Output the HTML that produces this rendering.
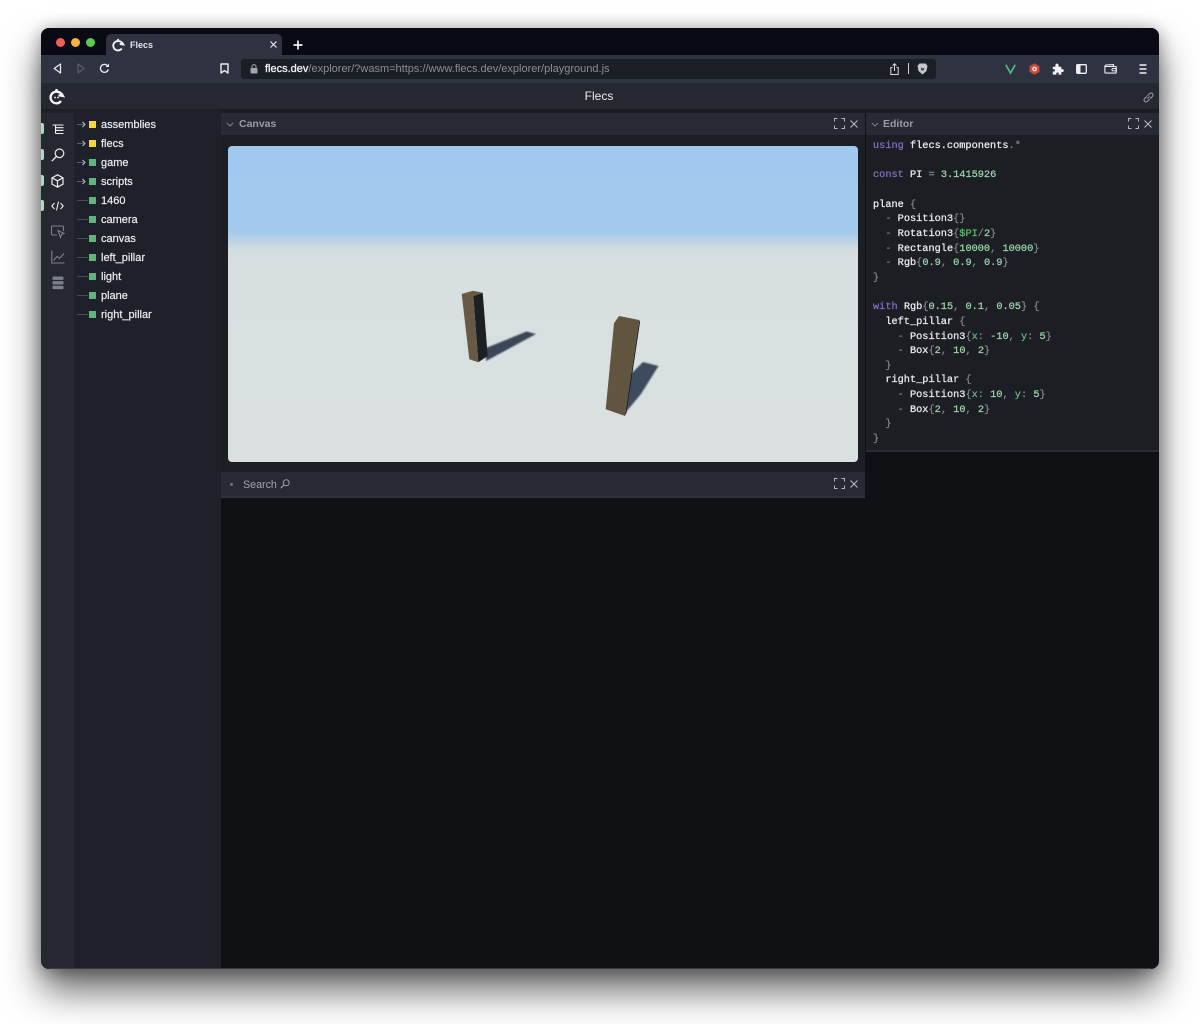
<!DOCTYPE html>
<html><head><meta charset="utf-8"><title>Flecs</title>
<style>
html,body{margin:0;padding:0;background:#fff;width:1200px;height:1024px;overflow:hidden}
*{box-sizing:border-box}
body{font-family:"Liberation Sans",sans-serif;position:relative}
#root{position:absolute;left:0;top:0;width:1200px;height:1024px;filter:blur(.3px)}
.a{position:absolute}
#win{left:41px;top:28px;width:1118px;height:941px;border-radius:8px;background:#101114;box-shadow:0 22px 38px rgba(0,0,0,.58),0 2px 18px rgba(0,0,0,.36)}
.t{position:absolute;white-space:pre;line-height:14px}
.row{position:absolute;left:101px;font-size:11px;color:#eceDF0;line-height:14px;white-space:pre;-webkit-text-stroke:.2px #eceDF0}
.sq{position:absolute;left:89px;width:7px;height:7px}
.dash{position:absolute;left:77px;width:11px;height:1px;background:#4a4d55}
.pill{position:absolute;left:41px;width:3px;height:11px;background:#a9dcb8;border-radius:0 2px 2px 0}
.code{position:absolute;left:873px;font-family:"Liberation Mono",monospace;font-size:10.28px;line-height:14px;white-space:pre;color:#eceDF0;-webkit-text-stroke:.25px currentColor}
.code i{font-style:normal}
.k{color:#7f6fc0}.n{color:#9ad6aa}.p{color:#80838c}.g{color:#5db87c}
svg{position:absolute;overflow:visible}
</style></head><body><div id="root">
<div id="win" class="a"></div>

<!-- tab strip -->
<div class="a" style="left:41px;top:28px;width:1118px;height:27px;background:#0a0a15;border-radius:8px 8px 0 0"></div>
<div class="a" style="left:56px;top:38px;width:9px;height:9px;border-radius:50%;background:#ee5f57"></div>
<div class="a" style="left:71px;top:38px;width:9px;height:9px;border-radius:50%;background:#f5b13d"></div>
<div class="a" style="left:86px;top:38px;width:9px;height:9px;border-radius:50%;background:#5fc94e"></div>
<div class="a" style="left:106px;top:34px;width:176px;height:21px;background:#2f3241;border-radius:5px 5px 0 0"></div>
<svg style="left:112px;top:37px" width="13" height="15" viewBox="0 0 16 18"><path d="M12 14A5.800 5.800 0 1 1 7.500 4.700C10 4.700 12.500 6 14 9L9.500 8.300" fill="none" stroke="#f2f2f4" stroke-width="2.300"/><circle cx="7.500" cy="3.200" r="1.300" fill="#f2f2f4"/></svg>
<div class="t" style="left:130px;top:38px;font-size:9px;font-weight:700;color:#e4e5ea">Flecs</div>
<svg style="left:270px;top:41px" width="7" height="7" viewBox="0 0 7 7"><path d="M.5.500l6 6M6.500.5l-6 6" stroke="#eceef2" stroke-width="1.100"/></svg>
<svg style="left:293px;top:40px" width="10" height="10" viewBox="0 0 10 10"><path d="M5 .5v9M.5 5h9" stroke="#f4f4f6" stroke-width="1.700"/></svg>

<!-- toolbar -->
<div class="a" style="left:41px;top:55px;width:1118px;height:28px;background:#2f3241"></div>
<svg style="left:53px;top:63px" width="9" height="11" viewBox="0 0 9 11"><path d="M7.500 1L1.200 5.500 7.500 10z" fill="none" stroke="#e8e9ec" stroke-width="1.300" stroke-linejoin="round"/></svg>
<svg style="left:77px;top:63px" width="8" height="11" viewBox="0 0 8 11"><path d="M1 1l6 4.500L1 10z" fill="none" stroke="#5a5d6a" stroke-width="1.200" stroke-linejoin="round"/></svg>
<svg style="left:99px;top:63px" width="11" height="11" viewBox="0 0 11 11"><path d="M9.300 6.500A4 4 0 1 1 8.200 2.400L9.500 3.500" fill="none" stroke="#eceef0" stroke-width="1.300"/><path d="M10 .6v3.400H6.600z" fill="#eceef0"/></svg>
<svg style="left:220px;top:63px" width="9" height="11" viewBox="0 0 9 11"><path d="M1 1h7v9L4.500 7.600 1 10z" fill="none" stroke="#eceef0" stroke-width="1.400" stroke-linejoin="round"/></svg>
<div class="a" style="left:241px;top:59px;width:695px;height:20px;background:#1c1e26;border-radius:3px"></div>
<svg style="left:250px;top:64px" width="8" height="10" viewBox="0 0 8 10"><rect x=".5" y="4" width="7" height="5.500" rx="1" fill="#a4a6ae"/><path d="M2 4V2.600a2 2 0 0 1 4 0V4" fill="none" stroke="#a4a6ae" stroke-width="1"/></svg>
<div class="t" style="left:265px;top:62px;font-size:11px;color:#8b8e97"><span style="color:#f4f5f7;-webkit-text-stroke:.3px #f4f5f7">flecs.dev</span>/explorer/?wasm=https://www.flecs.dev/explorer/playground.js</div>
<svg style="left:890px;top:63px" width="9" height="12" viewBox="0 0 9 12"><path d="M2.500 4.500H.8v7h7.400v-7H6.500M4.500 8V1M2.600 2.600L4.500.7l1.900 1.900" fill="none" stroke="#d8d9de" stroke-width="1"/></svg>
<div class="a" style="left:908px;top:63px;width:1px;height:11px;background:#d0d1d6"></div>
<svg style="left:917px;top:63px" width="11" height="12" viewBox="0 0 11 12"><path d="M2.500.5h6l2 2.300-1 5.200-4 3.500-4-3.500-1-5.200z" fill="#c4c6cd"/><path d="M3.500 4.500l2 1 2-1-1 3h-2z" fill="#3a3c48"/></svg>
<svg style="left:1005px;top:64px" width="11" height="10" viewBox="0 0 11 10"><path d="M.8.800L5.500 9 10.200.8" fill="none" stroke="#4cb985" stroke-width="1.700"/></svg>
<svg style="left:1029px;top:63px" width="11" height="12" viewBox="0 0 11 12"><path d="M5.500.3l5 2.800v5.800l-5 2.800-5-2.800V3.100z" fill="#cd4a3e"/><circle cx="5.500" cy="6" r="2.400" fill="#f2e4e0"/><circle cx="5.500" cy="6" r="1" fill="#cd4a3e"/></svg>
<svg style="left:1052px;top:63px" width="12" height="12" viewBox="0 0 12 12"><path d="M.8 3.800h2.700C3 1.500 4 .6 5 .6s2 .9 1.500 3.200h2.900v2.500c2-.5 2.400.6 2.400 1.300s-.4 1.800-2.400 1.300v2.700H6.600c.4-1.600-.3-2.100-1.100-2.100s-1.500.5-1.100 2.100H.8V8.500c1.600.4 2.100-.3 2.100-1.100S2.400 5.900.8 6.300z" fill="#f0f1f3"/></svg>
<svg style="left:1076px;top:64px" width="11" height="10" viewBox="0 0 11 10"><rect x=".7" y=".7" width="9.600" height="8.600" rx="1" fill="none" stroke="#f0f1f3" stroke-width="1.300"/><rect x="1" y="1" width="3.500" height="8" fill="#f0f1f3"/></svg>
<svg style="left:1104px;top:64px" width="13" height="10" viewBox="0 0 13 10"><path d="M1 2.500h10.500a.8.8 0 0 1 .8.8v5a.8.8 0 0 1-.8.8H1.700a.8.8 0 0 1-.8-.8V2.200C.9 1.500 1.400 1.200 2 1L9.500.6v1.900" fill="none" stroke="#eceef0" stroke-width="1.100"/><rect x="8" y="4.500" width="4.300" height="2.400" rx="1" fill="none" stroke="#eceef0" stroke-width="1"/></svg>
<svg style="left:1139px;top:64px" width="8" height="10" viewBox="0 0 8 10"><path d="M.5 1h7M.5 5h7M.5 9h7" stroke="#f0f1f3" stroke-width="1.400"/></svg>

<!-- app header -->
<div class="a" style="left:41px;top:83px;width:1118px;height:27px;background:#252831;border-bottom:1px solid #1a1c22"></div>
<svg style="left:49px;top:87px" width="16" height="18" viewBox="0 0 16 18"><path d="M12 14A5.800 5.800 0 1 1 7.500 4.700C10 4.700 12.500 6 14 9L9.500 8.300" fill="none" stroke="#f4f5f7" stroke-width="2.300"/><circle cx="7.500" cy="3.200" r="1.300" fill="#f4f5f7"/><circle cx="6" cy="10.500" r=".9" fill="#f4f5f7"/><circle cx="9" cy="10.500" r=".9" fill="#f4f5f7"/></svg>
<div class="t" style="left:0;top:89px;width:1198px;text-align:center;font-size:12px;color:#eceef0">Flecs</div>
<svg style="left:1143px;top:92px" width="11" height="11" viewBox="0 0 11 11"><path d="M4.500 6.500l2-2M3.800 4.400L1.600 6.600a1.900 1.900 0 0 0 2.800 2.800l2.200-2.200M7.200 6.600l2.200-2.200a1.900 1.900 0 0 0-2.800-2.800L4.400 3.800" fill="none" stroke="#a2a4ac" stroke-width="1"/></svg>

<!-- left rail -->
<div class="a" style="left:41px;top:110px;width:33px;height:859px;background:#252831;border-radius:0 0 0 8px"></div>
<div class="a" style="left:74px;top:110px;width:147px;height:859px;background:#1e2129"></div>
<div class="a" style="left:41px;top:110px;width:180px;height:3px;background:#1f2128"></div>
<div class="pill" style="top:123px"></div>
<div class="pill" style="top:149px"></div>
<div class="pill" style="top:175px"></div>
<div class="pill" style="top:200px"></div>
<svg style="left:52px;top:124px" width="12" height="11" viewBox="0 0 12 11"><path d="M.5 1h11M3.500 3.700h8M3.500 6.400h8M3.500 9.500h8M3.500 1v8.500" fill="none" stroke="#eceef0" stroke-width="1.100"/></svg>
<svg style="left:51px;top:148px" width="14" height="14" viewBox="0 0 14 14"><circle cx="8.500" cy="5.300" r="4.300" fill="none" stroke="#eceef0" stroke-width="1.200"/><path d="M5.400 8.500L.8 13.200" stroke="#eceef0" stroke-width="1.300"/></svg>
<svg style="left:51px;top:174px" width="13" height="14" viewBox="0 0 13 14"><path d="M6.500.8l5.500 3v6.400l-5.500 3-5.500-3V3.800zM1 3.800l5.500 3 5.500-3M6.500 6.800v6.400" fill="none" stroke="#eceef0" stroke-width="1.200"/></svg>
<svg style="left:51px;top:201px" width="13" height="10" viewBox="0 0 13 10"><path d="M3.500 2L.8 5l2.700 3M9.500 2l2.700 3-2.700 3M7.500.6L5.500 9.400" fill="none" stroke="#eceef0" stroke-width="1.100"/></svg>
<svg style="left:51px;top:225px" width="14" height="14" viewBox="0 0 14 14"><path d="M6 10H1.500a1 1 0 0 1-1-1V2a1 1 0 0 1 1-1h10a1 1 0 0 1 1 1v4" fill="none" stroke="#7e818a" stroke-width="1.100"/><path d="M7 5.500l6 3-2.500 1-1 3z" fill="none" stroke="#7e818a" stroke-width="1.100"/></svg>
<svg style="left:51px;top:250px" width="14" height="14" viewBox="0 0 14 14"><path d="M.8.500v12.500h12.700M2.500 10.500l3.500-4 2.500 2 4.500-5" fill="none" stroke="#7e818a" stroke-width="1.100"/></svg>
<svg style="left:52px;top:276px" width="12" height="14" viewBox="0 0 12 14"><rect x=".5" y=".5" width="11" height="3.400" rx=".8" fill="#7e818a"/><rect x=".5" y="5.100" width="11" height="3.400" rx=".8" fill="#7e818a"/><rect x=".5" y="9.700" width="11" height="3.400" rx=".8" fill="#7e818a"/></svg>

<!-- tree -->
<svg style="left:77px;top:120.500px" width="9" height="7" viewBox="0 0 9 7"><path d="M0 3.500h7" stroke="#5c5f66"/><path d="M5.500 1l2.500 2.500L5.500 6" fill="none" stroke="#cfd0d4" stroke-width=".9"/></svg>
<svg style="left:77px;top:139.500px" width="9" height="7" viewBox="0 0 9 7"><path d="M0 3.500h7" stroke="#5c5f66"/><path d="M5.500 1l2.500 2.500L5.500 6" fill="none" stroke="#cfd0d4" stroke-width=".9"/></svg>
<svg style="left:77px;top:158.500px" width="9" height="7" viewBox="0 0 9 7"><path d="M0 3.500h7" stroke="#5c5f66"/><path d="M5.500 1l2.500 2.500L5.500 6" fill="none" stroke="#cfd0d4" stroke-width=".9"/></svg>
<svg style="left:77px;top:177.500px" width="9" height="7" viewBox="0 0 9 7"><path d="M0 3.500h7" stroke="#5c5f66"/><path d="M5.500 1l2.500 2.500L5.500 6" fill="none" stroke="#cfd0d4" stroke-width=".9"/></svg>
<div class="sq" style="top:121px;background:#f6d63c"></div><div class="row" style="top:118px">assemblies</div>
<div class="sq" style="top:140px;background:#f6d63c"></div><div class="row" style="top:137px">flecs</div>
<div class="sq" style="top:159px;background:#5fb57c"></div><div class="row" style="top:156px">game</div>
<div class="sq" style="top:178px;background:#5fb57c"></div><div class="row" style="top:175px">scripts</div>
<div class="dash" style="top:200px"></div><div class="sq" style="top:197px;background:#5fb57c"></div><div class="row" style="top:194px">1460</div>
<div class="dash" style="top:219px"></div><div class="sq" style="top:216px;background:#5fb57c"></div><div class="row" style="top:213px">camera</div>
<div class="dash" style="top:238px"></div><div class="sq" style="top:235px;background:#5fb57c"></div><div class="row" style="top:232px">canvas</div>
<div class="dash" style="top:257px"></div><div class="sq" style="top:254px;background:#5fb57c"></div><div class="row" style="top:251px">left_pillar</div>
<div class="dash" style="top:276px"></div><div class="sq" style="top:273px;background:#5fb57c"></div><div class="row" style="top:270px">light</div>
<div class="dash" style="top:295px"></div><div class="sq" style="top:292px;background:#5fb57c"></div><div class="row" style="top:289px">plane</div>
<div class="dash" style="top:314px"></div><div class="sq" style="top:311px;background:#5fb57c"></div><div class="row" style="top:308px">right_pillar</div>

<!-- canvas panel -->
<div class="a" style="left:221px;top:110px;width:938px;height:3px;background:#1b1d23"></div>
<div class="a" style="left:221px;top:113px;width:644px;height:22px;background:#272a34"></div>
<div class="a" style="left:221px;top:135px;width:644px;height:337px;background:#1c1e24"></div>
<svg style="left:226px;top:122px" width="8" height="5" viewBox="0 0 8 5"><path d="M.8.800L4 4l3.200-3.200" fill="none" stroke="#7d808a" stroke-width="1"/></svg>
<div class="t" style="left:239px;top:117px;font-size:10.500px;font-weight:700;color:#9a9ca4">Canvas</div>
<svg style="left:834px;top:118px" width="11" height="11" viewBox="0 0 11 11"><path d="M.5 3.500v-3h3M7.500.5h3v3M10.500 7.500v3h-3M3.500 10.500h-3v-3" fill="none" stroke="#b4b6bc" stroke-width="1"/></svg>
<svg style="left:850px;top:120px" width="8" height="8" viewBox="0 0 8 8"><path d="M.5.500l7 7M7.500.5l-7 7" stroke="#b4b6bc" stroke-width="1.100"/></svg>

<div class="a" style="left:228px;top:146px;width:630px;height:316px;border-radius:4px;overflow:hidden;background:linear-gradient(180deg,#9fc9ef 0,#a1caee 26%,#a7cceb 27.500%,#c5d6e2 31%,#d4dde0 33%,#d8dfe0 40%,#dae0df 100%)"></div>
<svg style="left:0;top:0" width="1200" height="1024" viewBox="0 0 1200 1024">
<defs><filter id="b" x="-20%" y="-20%" width="140%" height="140%"><feGaussianBlur stdDeviation=".8"/></filter></defs>
<polygon points="486,348 526.500,331.500 536,334 486,361" fill="#3a4759" filter="url(#b)"/>
<polygon points="631,374 643,362 658.500,366 641,394 626,412" fill="#3e4c5f" filter="url(#b)"/>
<polygon points="473.300,296 482.700,292.700 487.700,356 478.300,362.300" fill="#1d2022"/>
<polygon points="461.700,294 473,290.700 482.700,292.700 473.300,296 478.300,362.300 469.300,359.300" fill="#675943"/>
<polygon points="639.300,320 625,416 626.500,413 640,322" fill="#17191b"/>
<polygon points="614,323.300 619,316 639.300,320 625,416 605.700,409.300" fill="#625540"/>
</svg>

<!-- search panel -->
<div class="a" style="left:221px;top:472px;width:644px;height:26px;background:#272a34;border-bottom:2px solid #30333e"></div>
<div class="a" style="left:230px;top:483px;width:3px;height:3px;border-radius:50%;background:#6d7079"></div>
<div class="t" style="left:243px;top:478px;font-size:10.700px;color:#a0a2aa">Search</div>
<svg style="left:280px;top:479px" width="10" height="10" viewBox="0 0 10 10"><circle cx="6.200" cy="3.800" r="3" fill="none" stroke="#a0a2aa" stroke-width="1"/><path d="M4 6L.8 9.200" stroke="#a0a2aa" stroke-width="1.100"/></svg>
<svg style="left:834px;top:478px" width="11" height="11" viewBox="0 0 11 11"><path d="M.5 3.500v-3h3M7.500.5h3v3M10.500 7.500v3h-3M3.500 10.500h-3v-3" fill="none" stroke="#b4b6bc" stroke-width="1"/></svg>
<svg style="left:850px;top:480px" width="8" height="8" viewBox="0 0 8 8"><path d="M.5.500l7 7M7.500.5l-7 7" stroke="#b4b6bc" stroke-width="1.100"/></svg>

<!-- editor -->
<div class="a" style="left:865px;top:113px;width:1px;height:339px;background:#101114"></div>
<div class="a" style="left:866px;top:113px;width:293px;height:22px;background:#272a34"></div>
<div class="a" style="left:866px;top:135px;width:293px;height:315px;background:#1c1e23"></div>
<div class="a" style="left:866px;top:450px;width:293px;height:2px;background:#2a2d36"></div>
<svg style="left:871px;top:122px" width="8" height="5" viewBox="0 0 8 5"><path d="M.8.800L4 4l3.200-3.200" fill="none" stroke="#7d808a" stroke-width="1"/></svg>
<div class="t" style="left:883px;top:117px;font-size:10.500px;font-weight:700;color:#9a9ca4">Editor</div>
<svg style="left:1128px;top:118px" width="11" height="11" viewBox="0 0 11 11"><path d="M.5 3.500v-3h3M7.500.5h3v3M10.500 7.500v3h-3M3.500 10.500h-3v-3" fill="none" stroke="#b4b6bc" stroke-width="1"/></svg>
<svg style="left:1144px;top:120px" width="8" height="8" viewBox="0 0 8 8"><path d="M.5.500l7 7M7.500.5l-7 7" stroke="#b4b6bc" stroke-width="1.100"/></svg>

<div class="code" style="top:139px"><i class="k">using</i> flecs.components<i class="p">.*</i></div>
<div class="code" style="top:168px"><i class="k">const</i> PI <i class="p">=</i> <i class="n">3.1415926</i></div>
<div class="code" style="top:198px">plane <i class="p">{</i></div>
<div class="code" style="top:212px">  <i class="p">-</i> Position3<i class="p">{}</i></div>
<div class="code" style="top:227px">  <i class="p">-</i> Rotation3<i class="p">{</i><i class="g">$PI</i><i class="p">/</i><i class="n">2</i><i class="p">}</i></div>
<div class="code" style="top:242px">  <i class="p">-</i> Rectangle<i class="p">{</i><i class="n">10000</i><i class="p">,</i> <i class="n">10000</i><i class="p">}</i></div>
<div class="code" style="top:256px">  <i class="p">-</i> Rgb<i class="p">{</i><i class="n">0.9</i><i class="p">,</i> <i class="n">0.9</i><i class="p">,</i> <i class="n">0.9</i><i class="p">}</i></div>
<div class="code" style="top:271px"><i class="p">}</i></div>
<div class="code" style="top:300px"><i class="k">with</i> Rgb<i class="p">{</i><i class="n">0.15</i><i class="p">,</i> <i class="n">0.1</i><i class="p">,</i> <i class="n">0.05</i><i class="p">}</i> <i class="p">{</i></div>
<div class="code" style="top:315px">  left_pillar <i class="p">{</i></div>
<div class="code" style="top:330px">    <i class="p">-</i> Position3<i class="p">{</i><i class="g">x</i><i class="p">:</i> <i class="n">-10</i><i class="p">,</i> <i class="g">y</i><i class="p">:</i> <i class="n">5</i><i class="p">}</i></div>
<div class="code" style="top:344px">    <i class="p">-</i> Box<i class="p">{</i><i class="n">2</i><i class="p">,</i> <i class="n">10</i><i class="p">,</i> <i class="n">2</i><i class="p">}</i></div>
<div class="code" style="top:359px">  <i class="p">}</i></div>
<div class="code" style="top:373px">  right_pillar <i class="p">{</i></div>
<div class="code" style="top:388px">    <i class="p">-</i> Position3<i class="p">{</i><i class="g">x</i><i class="p">:</i> <i class="n">10</i><i class="p">,</i> <i class="g">y</i><i class="p">:</i> <i class="n">5</i><i class="p">}</i></div>
<div class="code" style="top:403px">    <i class="p">-</i> Box<i class="p">{</i><i class="n">2</i><i class="p">,</i> <i class="n">10</i><i class="p">,</i> <i class="n">2</i><i class="p">}</i></div>
<div class="code" style="top:417px">  <i class="p">}</i></div>
<div class="code" style="top:432px"><i class="p">}</i></div>
<div class="a" style="left:49px;top:968px;width:1102px;height:1px;background:#3a3d48"></div>
</div></body></html>
